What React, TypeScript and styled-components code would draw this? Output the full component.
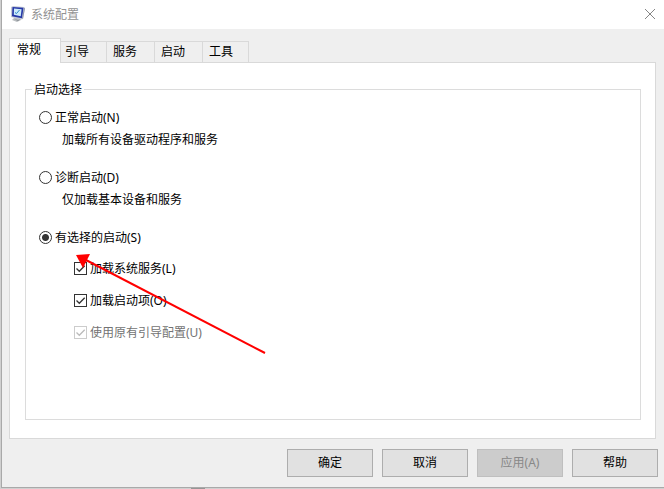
import React, { useState } from "react";
import styled, { createGlobalStyle } from "styled-components";

const GlobalStyle = createGlobalStyle`
  *, *::before, *::after { box-sizing: border-box; }
  body {
    margin: 0;
    background: #e2e2e2;
    font-family: "Noto Sans", "Noto Sans CJK SC", sans-serif;
    font-size: 12px;
    line-height: 18px;
    color: #000;
  }
  button, input { font: inherit; margin: 0; }
`;

const Desktop = styled.div`
  min-height: 100vh;
  display: flex;
  padding: 0 0 1px 1px;
  background: linear-gradient(#969696, #969696) 191px 100% / 14px 1px no-repeat, #d0d0d0;
`;

const Dialog = styled.main`
  position: relative;
  flex: 1;
  display: flex;
  flex-direction: column;
  background: #efefef;
  border: solid #a9a9a9;
  border-width: 0 0 1px 1px;
`;

const TitleBar = styled.header`
  display: flex;
  align-items: center;
  gap: 5px;
  height: 29px;
  padding: 0 8px 2px;
  background: #fff;
  color: #929292;
`;

const Title = styled.h1`
  flex: 1;
  margin: 0;
  padding-top: 2px;
  font-size: 12px;
  font-weight: 400;
`;

const CloseButton = styled.button`
  display: flex;
  padding: 0;
  border: 0;
  background: none;
  color: #858585;
`;

const TabList = styled.div`
  display: flex;
  align-items: flex-end;
  padding: 9px 7px 0;
`;

const Tab = styled.button<{ $active: boolean }>`
  position: relative;
  z-index: ${(p) => (p.$active ? 1 : 0)};
  height: ${(p) => (p.$active ? 25 : 21)}px;
  margin: ${(p) => (p.$active ? "0 -2px -1px 0" : "0")};
  padding: ${(p) => (p.$active ? "0 19px 2px 7px" : "0 17px 0 6px")};
  border: solid #d9d9d9;
  border-width: ${(p) => (p.$active ? "1px 1px 0" : "1px 1px 0 0")};
  background: ${(p) => (p.$active ? "#fff" : "#efefef")};
  color: #000;
  line-height: 18px;

  &:last-child { padding-right: 15px; }
`;

const Panel = styled.section`
  flex: 1;
  display: flex;
  margin: 0 8px 0 7px;
  padding: 16px 14px 18px 15px;
  border: 1px solid #d9d9d9;
  background: #fff;
`;

const Group = styled.fieldset`
  flex: 1;
  min-width: 0;
  margin: 0;
  padding: 8px 12px 0 6px;
  border: 1px solid #dcdcdc;
`;

const Legend = styled.legend`
  padding: 2px 2px 0;
`;

const Modes = styled.div`
  display: flex;
  flex-direction: column;
  gap: 18px;
  padding-left: 7px;
`;

const Mode = styled.div`
  display: flex;
  flex-direction: column;
  gap: 4px;
`;

const Choice = styled.label<{ $disabled?: boolean }>`
  display: flex;
  align-items: center;
  gap: 3px;
  color: ${(p) => (p.$disabled ? "#737373" : "#000")};
`;

const ChoiceText = styled.span`
  padding-top: 2px;
`;

const Hint = styled.p`
  margin: 0 0 0 23px;
`;

const Radio = styled.input`
  appearance: none;
  width: 13px;
  height: 13px;
  border: 1px solid #333;
  border-radius: 50%;
  background: #fff;

  &:checked {
    background: radial-gradient(circle, #333 0 3px, #fff 4px);
  }
`;

const CheckFrame = styled.span`
  display: grid;
  width: 13px;
  height: 13px;

  > * { grid-area: 1 / 1; }
  svg { pointer-events: none; }
`;

const CheckInput = styled.input`
  appearance: none;
  width: 13px;
  height: 13px;
  border: 1px solid #333;
  background: #fff;
  color: #333;

  &:disabled { border-color: #ccc; }
  &:not(:checked) + svg { visibility: hidden; }
`;

const Options = styled.div`
  display: flex;
  flex-direction: column;
  gap: 12px;
  margin: 11px 0 0 42px;
`;

const Footer = styled.footer`
  display: flex;
  justify-content: flex-end;
  gap: 9px;
  padding: 10px 6px;
`;

const ActionButton = styled.button`
  width: 86px;
  height: 28px;
  padding: 0;
  border: 1px solid #adadad;
  background: #e1e1e1;
  color: #000;

  &:disabled {
    border-color: #bfbfbf;
    background: #ccc;
    color: #888;
  }
`;

const Arrow = styled.svg`
  position: absolute;
  left: 72px;
  top: 250px;
  pointer-events: none;
`;

const MonitorIcon = () => (
  <svg width="16" height="16" viewBox="0 0 16 16" aria-hidden="true">
    <path d="M5 11l5 1 1 2-4 2-5-2z" fill="#b9bdc0" />
    <path d="M4 13l4 1 3-1-3 2z" fill="#858b91" />
    <path d="M1 1l2-1 11 1 1 1-2 11-2 .4L1 11z" fill="#c5cad6" />
    <path d="M2.500 1L13.500 1.800 12 12.300 2 10.300z" fill="#2537a8" />
    <path d="M4 2.600l7.600.700-.9 7-6.900-1.500z" fill="#cceafa" />
    <path d="M5 6.500l1.500 1L9.500 4" fill="none" stroke="#2a86c8" strokeWidth="1" />
    <path d="M14 2l1 .3-2 10.500-1-.6z" fill="#8f96ad" />
  </svg>
);

const CloseIcon = () => (
  <svg width="12" height="12" viewBox="0 0 12 12" aria-hidden="true">
    <path d="M1 1l10 10M11 1L1 11" stroke="currentColor" fill="none" />
  </svg>
);

interface CheckProps {
  label: string;
  disabled?: boolean;
}

const Check = ({ label, disabled }: CheckProps) => (
  <Choice $disabled={disabled}>
    <CheckFrame>
      <CheckInput type="checkbox" defaultChecked disabled={disabled} />
      <svg width="13" height="13" viewBox="0 0 13 13" aria-hidden="true">
        <path d="M2.500 6.500l2.800 2.800 5.400-5.600" fill="none" stroke={disabled ? "#bbb" : "#333"} strokeWidth="1.300" />
      </svg>
    </CheckFrame>
    <ChoiceText>{label}</ChoiceText>
  </Choice>
);

const tabs = ["常规", "引导", "服务", "启动", "工具"];

const modes = [
  { id: "normal", label: "正常启动(N)", hint: "加载所有设备驱动程序和服务" },
  { id: "diagnostic", label: "诊断启动(D)", hint: "仅加载基本设备和服务" },
  { id: "selective", label: "有选择的启动(S)" },
];

export default function App() {
  const [mode, setMode] = useState("selective");

  return (
    <>
      <GlobalStyle />
      <Desktop>
        <Dialog>
          <TitleBar>
            <MonitorIcon />
            <Title>系统配置</Title>
            <CloseButton aria-label="关闭"><CloseIcon /></CloseButton>
          </TitleBar>
          <TabList role="tablist">
            {tabs.map((name, i) => (
              <Tab key={name} role="tab" aria-selected={i === 0} $active={i === 0}>{name}</Tab>
            ))}
          </TabList>
          <Panel role="tabpanel">
            <Group>
              <Legend>启动选择</Legend>
              <Modes>
                {modes.map(({ id, label, hint }) => (
                  <Mode key={id}>
                    <Choice>
                      <Radio type="radio" name="mode" checked={mode === id} onChange={() => setMode(id)} />
                      <ChoiceText>{label}</ChoiceText>
                    </Choice>
                    {hint && <Hint>{hint}</Hint>}
                  </Mode>
                ))}
              </Modes>
              <Options>
                <Check label="加载系统服务(L)" />
                <Check label="加载启动项(O)" />
                <Check label="使用原有引导配置(U)" disabled />
              </Options>
            </Group>
          </Panel>
          <Footer>
            <ActionButton>确定</ActionButton>
            <ActionButton>取消</ActionButton>
            <ActionButton disabled>应用(A)</ActionButton>
            <ActionButton>帮助</ActionButton>
          </Footer>
          <Arrow width="196" height="106" viewBox="0 0 196 106" aria-hidden="true">
            <path d="M10 9L191 103" stroke="#f00" strokeWidth="2" />
            <path d="M2 5l14-1-7 14z" fill="#f00" />
          </Arrow>
        </Dialog>
      </Desktop>
    </>
  );
}
